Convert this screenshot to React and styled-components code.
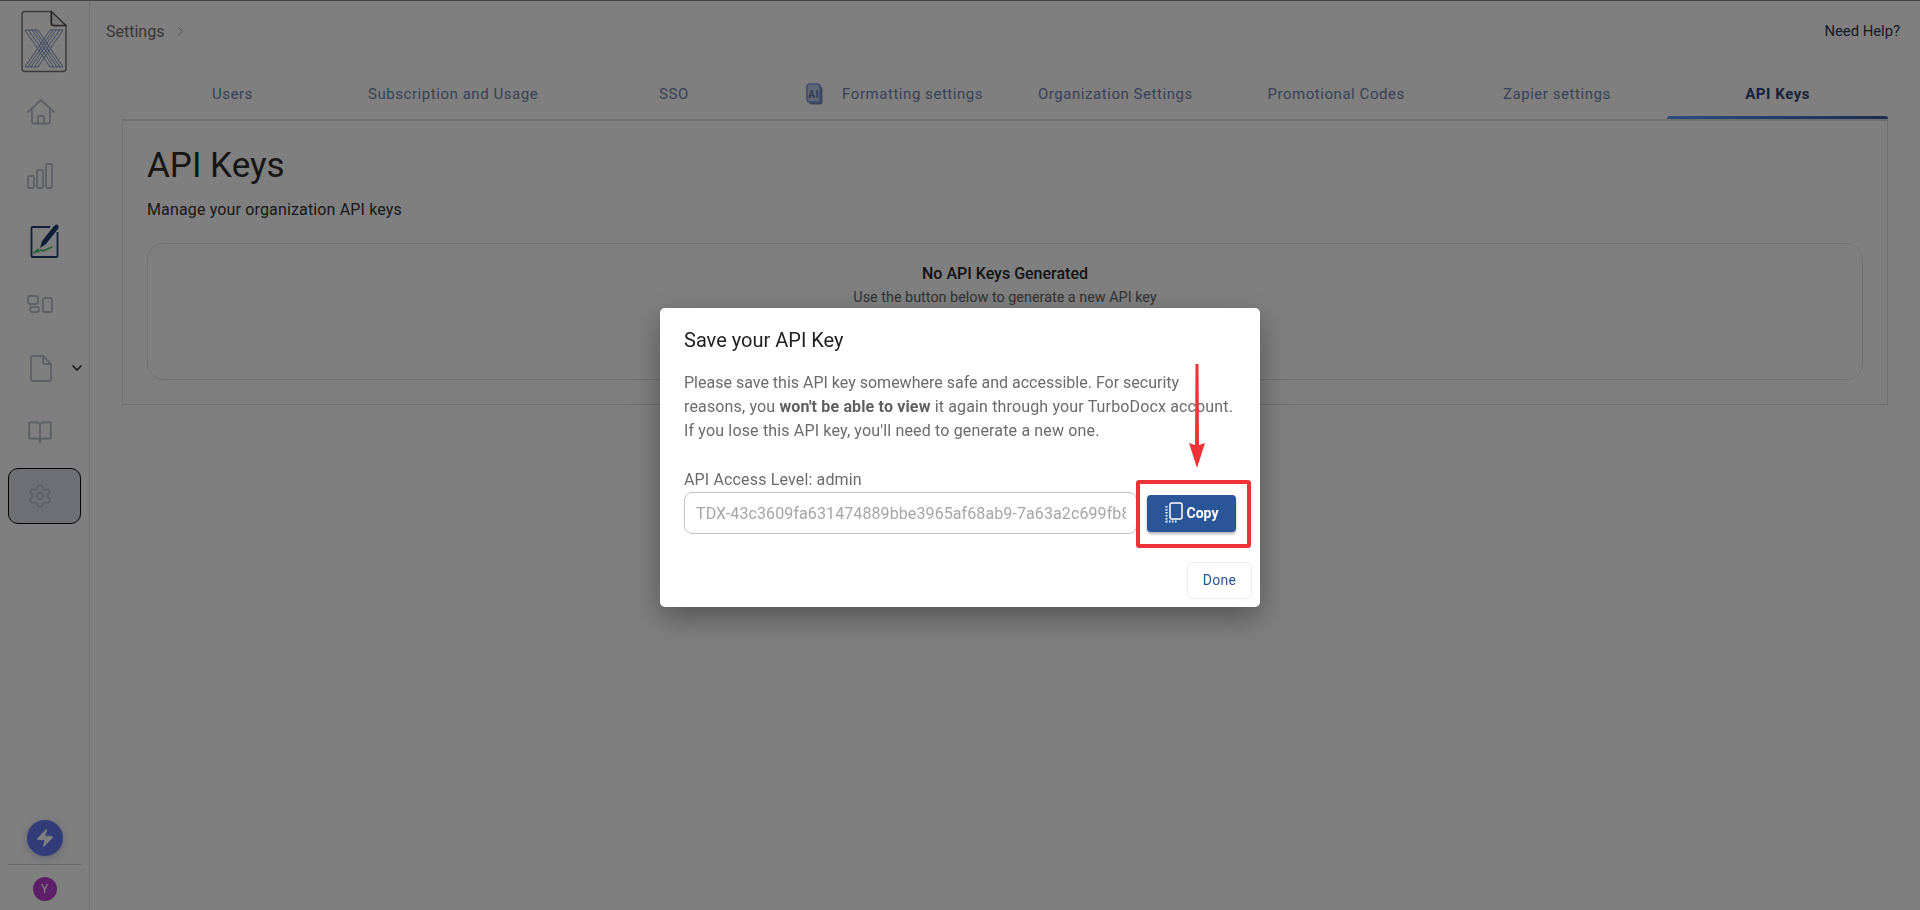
import React from 'react';
import styled, { createGlobalStyle } from 'styled-components';
import { ChevronRight, ChevronDown, Settings, BookOpen, Zap } from 'lucide-react';

const Global = createGlobalStyle`
  html, body { margin: 0; padding: 0; background: #fff; }
  body { font-family: Roboto, "Liberation Sans", sans-serif; }
  * { box-sizing: border-box; }
`;

const Page = styled.div`
  display: flex;
  width: 1920px;
  height: 910px;
  overflow: hidden;
  border-top: 1px solid #888;
`;

const Sidebar = styled.aside`
  width: 90px;
  flex: none;
  border-right: 1px solid #dedede;
  display: flex;
  flex-direction: column;
  padding-top: 9px;
`;

const LogoWrap = styled.div`
  height: 74px;
  padding-left: 21px;
`;

const Nav = styled.nav`
  display: flex;
  flex-direction: column;
  gap: 8px;
  flex: 1;
`;

const NavItem = styled.div`
  width: 73px;
  height: 56px;
  margin-left: 8px;
  padding-left: 18px;
  display: flex;
  align-items: center;
  color: #bcc1cf;
  border-radius: 10px;
  border: 1px solid ${p => (p.$active ? '#000' : 'transparent')};
  background: ${p => (p.$active ? '#dfe1ea' : 'transparent')};

  svg { flex: none; }
`;

const NavArrow = styled.span`
  margin-left: 17px;
  flex: none;
  display: flex;
  color: #2b2b2b;
`;

const SideBottom = styled.div`
  display: flex;
  flex-direction: column;
  align-items: center;
  width: 89px;
`;

const BoltButton = styled.div`
  width: 36px;
  height: 36px;
  border-radius: 50%;
  background: #6478f2;
  color: #fff;
  display: flex;
  align-items: center;
  justify-content: center;
  box-shadow: 0 2px 8px rgba(60, 70, 160, .3);
`;

const SideDivider = styled.div`
  width: 73px;
  height: 1px;
  background: #d0d0d0;
  margin: 8px 0 12px;
`;

const Avatar = styled.div`
  width: 24px;
  height: 24px;
  border-radius: 50%;
  background: #bb3fd0;
  color: #fff;
  font-size: 12px;
  display: flex;
  align-items: center;
  justify-content: center;
  margin-bottom: 9px;
`;

const Main = styled.main`
  flex: 1;
  min-width: 0;
  padding: 0 32px 0 32px;
`;

const TopBar = styled.div`
  height: 60px;
  margin-left: -16px;
  margin-right: -12px;
  display: flex;
  align-items: center;
  justify-content: space-between;
`;

const Crumb = styled.div`
  display: flex;
  align-items: center;
  gap: 9px;
  font-size: 16px;
  color: #6e6e6e;
`;

const Help = styled.a`
  font-size: 14.8px;
  color: #2a3550;
`;

const Tabs = styled.div`
  display: grid;
  grid-template-columns: repeat(8, 1fr);
  height: 60px;
  border-bottom: 2px solid #dde1e6;
`;

const Tab = styled.div`
  position: relative;
  display: flex;
  align-items: center;
  justify-content: center;
  gap: 19px;
  padding-top: 7px;
  font-size: 15px;
  letter-spacing: .55px;
  font-weight: ${p => (p.$active ? 700 : 400)};
  color: ${p => (p.$active ? '#2f4673' : '#7085b0')};

  ${p => p.$active && `
    &::after {
      content: '';
      position: absolute;
      left: 0;
      right: 0;
      bottom: 0;
      height: 3px;
      border-radius: 3px 3px 0 0;
      background: linear-gradient(90deg, #5a9bf5, #37599f);
    }
  `}
`;

const Panel = styled.section`
  height: 284px;
  border: 1px solid #dedede;
  border-top: 0;
  padding: 24px 24px 0;
`;

const Heading = styled.h1`
  margin: 0;
  font-size: 35px;
  line-height: 42px;
  font-weight: 400;
  color: #2e2e2e;
`;

const Sub = styled.p`
  margin: 11px 0 0;
  font-size: 16px;
  line-height: 24px;
  letter-spacing: .15px;
  color: #333;
`;

const EmptyCard = styled.div`
  margin-top: 21px;
  height: 137px;
  border: 1px solid #e3e3e3;
  border-radius: 16px;
  padding-top: 19px;
  text-align: center;
`;

const EmptyTitle = styled.div`
  font-size: 16px;
  line-height: 22px;
  font-weight: 500;
  color: #262626;
`;

const EmptyText = styled.div`
  margin-top: 2px;
  font-size: 14.4px;
  line-height: 22px;
  color: #666;
`;

const Backdrop = styled.div`
  position: fixed;
  inset: 0;
  background: rgba(0, 0, 0, .5);
  display: flex;
  align-items: flex-start;
  justify-content: center;
  padding-top: 308px;
`;

const Modal = styled.div`
  position: relative;
  width: 600px;
  height: 299px;
  background: #fff;
  border-radius: 5px;
  padding: 20px 8px 8px 24px;
  box-shadow: 0 11px 30px rgba(0, 0, 0, .35);
`;

const ModalTitle = styled.h2`
  margin: 0;
  font-size: 20px;
  line-height: 24px;
  font-weight: 400;
  color: #212121;
`;

const ModalBody = styled.div`
  margin: 19px 0 0;
  width: 560px;
  font-size: 16px;
  line-height: 24px;
  color: #6b6b6b;

  b { font-weight: 700; color: #5f5f5f; }
`;

const BodyLine = styled.span`
  display: block;
  letter-spacing: ${p => p.$spacing || 0}px;
`;

const FieldLabel = styled.label`
  display: block;
  margin-top: 27px;
  font-size: 16px;
  line-height: 20px;
  letter-spacing: .15px;
  color: #6b6b6b;
`;

const FieldRow = styled.div`
  display: flex;
  align-items: center;
  gap: 10px;
  margin-top: 2px;
`;

const KeyInput = styled.input`
  width: 453px;
  height: 42px;
  padding: 0 10px 0 11px;
  border: 1px solid #c4c4c4;
  border-radius: 8px;
  font: 400 16px Roboto, sans-serif;
  letter-spacing: .1px;
  color: #a6a6a6;
  outline: none;
`;

const CopyButton = styled.button`
  width: 89px;
  height: 37px;
  padding-bottom: 2px;
  border: 0;
  border-radius: 4px;
  background: #2b5599;
  color: #fff;
  font: 700 14px Roboto, sans-serif;
  display: flex;
  align-items: center;
  justify-content: center;
  gap: 4px;
  box-shadow: 0 2px 3px rgba(0, 0, 0, .3);
`;

const Footer = styled.div`
  display: flex;
  justify-content: flex-end;
  margin-top: 28px;
`;

const DoneButton = styled.button`
  width: 65px;
  height: 37px;
  padding-bottom: 2px;
  background: #fff;
  border: 1px solid #ececec;
  border-radius: 6px;
  color: #2b5599;
  font: 400 14px Roboto, sans-serif;
  letter-spacing: .3px;
`;

const Highlight = styled.div`
  position: absolute;
  left: 476px;
  top: 172px;
  width: 115px;
  height: 68px;
  border: 4px solid #ee3338;
  border-radius: 3px;
`;

const Arrow = styled.svg`
  position: absolute;
  left: 528px;
  top: 56px;
`;

function LogoMark() {
  return (
    <svg width="46" height="63" viewBox="0 0 46 63" fill="none">
      <path d="M4 1.5h26v12q0 2 2 2h13v43q0 3-3 3H4q-3 0-3-3v-54q0-3 3-3z" fill="#fff" stroke="#777" strokeWidth="1.4" />
      <path d="M30.5 1.5l14.5 14H33q-2.500 0-2.500-2.500z" fill="#eee" stroke="#555" strokeWidth="1.4" />
      <g stroke="#7187bb" strokeWidth=".9">
        <path d="M4 20h13l25 37H29zM7.500 20l25 37M11 20l25 37M14 20l25 37" />
        <path d="M42 20H29L4 57h13zM38.500 20l-25 37M35 20L10 57M32 20L7 57" />
      </g>
    </svg>
  );
}

function HomeIcon() {
  return (
    <svg width="28" height="26" viewBox="0 0 28 26" fill="none" stroke="currentColor" strokeWidth="1.8" strokeLinejoin="round" strokeLinecap="round">
      <path d="M1 13L14 1l13 12M5 10v13q0 1.500 1.500 1.500h15q1.500 0 1.500-1.500V10" />
      <path d="M11 24.500V18q0-1 1-1h4q1 0 1 1v6.500" />
    </svg>
  );
}

function ChartIcon() {
  return (
    <svg width="26" height="26" viewBox="0 0 26 26" fill="none" stroke="currentColor" strokeWidth="1.8">
      <rect x="1" y="13" width="6" height="12" rx="1.500" />
      <rect x="10" y="7" width="6" height="18" rx="1.500" />
      <rect x="19" y="1" width="6" height="24" rx="1.500" />
    </svg>
  );
}

function SignIcon() {
  return (
    <svg width="34" height="36" viewBox="0 0 34 36" fill="none">
      <path d="M23 5H5.500q-1 0-1 1v28q0 1 1 1h24q1 0 1-1V10" stroke="#1d4373" strokeWidth="1.800" />
      <path d="M13 26l2-7L27 4q2-2.500 4-1 1.500 1.500 0 4L19 22z" fill="#1b3f72" />
      <path d="M7 31l4-4-1 3 4-2 2 1 9-4" stroke="#4fbf70" strokeWidth="1.500" strokeLinecap="round" strokeLinejoin="round" />
    </svg>
  );
}

function BlocksIcon() {
  return (
    <svg width="26" height="18" viewBox="0 0 26 18" fill="none" stroke="currentColor" strokeWidth="1.800">
      <rect x="1" y="1" width="10" height="8" rx="2" />
      <rect x="3" y="12" width="9" height="5" rx="2" />
      <rect x="16" y="3" width="9" height="14" rx="2" />
    </svg>
  );
}

function FileIcon() {
  return (
    <svg width="25" height="27" viewBox="-3 0 25 27" fill="none" stroke="currentColor" strokeWidth="1.800" strokeLinejoin="round">
      <path d="M3 1h10l8 8v15q0 2-2 2H3q-2 0-2-2V3q0-2 2-2z" />
      <path d="M13 1v6q0 2 2 2h6" />
    </svg>
  );
}

function AiIcon() {
  return (
    <svg width="17" height="22" viewBox="0 0 17 22" fill="none">
      <rect x="3" y="3.500" width="13.500" height="18" rx="2.500" fill="#7b8cb0" />
      <rect x="1" y="1" width="13" height="18" rx="2.500" fill="#c3cfe8" stroke="#7a9ee0" strokeWidth="1.700" />
      <text x="7.500" y="14.500" textAnchor="middle" fontFamily="Roboto, sans-serif" fontSize="10" fontWeight="700" fill="#5d76ab">AI</text>
    </svg>
  );
}

function CopyIcon() {
  return (
    <svg width="18" height="22" viewBox="0 0 18 22" fill="none" stroke="#fff">
      <rect x="5" y="1" width="12" height="16" rx="2" strokeWidth="1.500" />
      <path d="M1.500 4v15.500H13" strokeWidth="2" strokeDasharray="1.500 1.500" />
    </svg>
  );
}

const tabs = ['Users', 'Subscription and Usage', 'SSO', 'Formatting settings', 'Organization Settings', 'Promotional Codes', 'Zapier settings', 'API Keys'];

export default function App() {
  return (
    <>
      <Global />
      <Page>
        <Sidebar>
          <LogoWrap><LogoMark /></LogoWrap>
          <Nav>
            <NavItem><HomeIcon /></NavItem>
            <NavItem><ChartIcon /></NavItem>
            <NavItem><SignIcon /></NavItem>
            <NavItem><BlocksIcon /></NavItem>
            <NavItem>
              <FileIcon />
              <NavArrow><ChevronDown size={16} strokeWidth={2.500} /></NavArrow>
            </NavItem>
            <NavItem><BookOpen size={26} strokeWidth={1.800} /></NavItem>
            <NavItem $active><Settings size={26} strokeWidth={1.800} /></NavItem>
          </Nav>
          <SideBottom>
            <BoltButton><Zap size={20} fill="#fff" strokeWidth={1} /></BoltButton>
            <SideDivider />
            <Avatar>Y</Avatar>
          </SideBottom>
        </Sidebar>
        <Main>
          <TopBar>
            <Crumb>Settings <ChevronRight size={15} strokeWidth={1.200} color="#8a8a8a" /></Crumb>
            <Help>Need Help?</Help>
          </TopBar>
          <Tabs>
            {tabs.map(t => (
              <Tab key={t} $active={t === 'API Keys'}>
                {t === 'Formatting settings' && <AiIcon />}
                {t}
              </Tab>
            ))}
          </Tabs>
          <Panel>
            <Heading>API Keys</Heading>
            <Sub>Manage your organization API keys</Sub>
            <EmptyCard>
              <EmptyTitle>No API Keys Generated</EmptyTitle>
              <EmptyText>Use the button below to generate a new API key</EmptyText>
            </EmptyCard>
          </Panel>
        </Main>
      </Page>
      <Backdrop>
        <Modal>
          <ModalTitle>Save your API Key</ModalTitle>
          <ModalBody>
            <BodyLine>Please save this API key somewhere safe and accessible. For security</BodyLine>
            <BodyLine $spacing={0.15}>reasons, you <b>won't be able to view</b> it again through your TurboDocx account.</BodyLine>
            <BodyLine $spacing={0.16}>If you lose this API key, you'll need to generate a new one.</BodyLine>
          </ModalBody>
          <FieldLabel>API Access Level: admin</FieldLabel>
          <FieldRow>
            <KeyInput readOnly value="TDX-43c3609fa631474889bbe3965af68ab9-7a63a2c699fb8e0d41" />
            <CopyButton><CopyIcon />Copy</CopyButton>
          </FieldRow>
          <Footer><DoneButton>Done</DoneButton></Footer>
          <Highlight />
          <Arrow width="18" height="104" viewBox="0 0 18 104" fill="none">
            <path d="M7.500 0h3l.5 81 6-2-8 25-8-25 6 2z" fill="#ee3338" />
          </Arrow>
        </Modal>
      </Backdrop>
    </>
  );
}
